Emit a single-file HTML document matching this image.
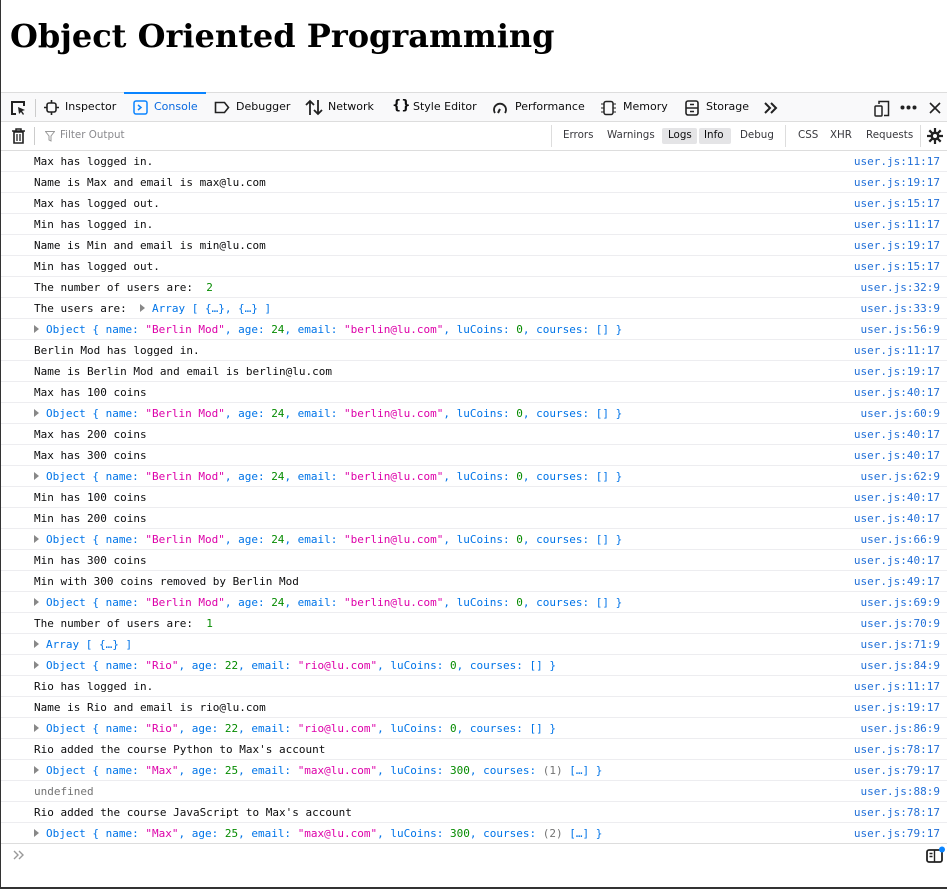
<!DOCTYPE html>
<html><head><meta charset="utf-8"><style>
*{margin:0;padding:0;box-sizing:border-box}
body{width:947px;height:889px;overflow:hidden;background:#fff;position:relative;font-family:"Liberation Sans","DejaVu Sans",sans-serif;border-left:1px solid #333;border-bottom:2px solid #333}
h1{position:absolute;left:9px;top:17px;font:bold 32px "DejaVu Serif",serif;color:#000;white-space:nowrap}
.tb{position:absolute;left:0;top:92px;width:947px;height:30px;background:#f9f9fa;border-top:1px solid #ddd;border-bottom:1px solid #ddd}
.tb span,.fb span{position:absolute;font-family:"DejaVu Sans",sans-serif;font-size:11px;color:#0c0c0d;top:7px;white-space:nowrap}
.fb{position:absolute;left:0;top:122px;width:947px;height:29px;background:#fff;border-bottom:1px solid #ddd}
.fb span{font-size:10.3px;top:7px;color:#38383d}
.ico{position:absolute}
#rows{position:absolute;left:0;top:151px;width:947px}
.r{height:21px;border-bottom:1px solid #ededf0;position:relative;font:11px "DejaVu Sans Mono",monospace;color:#0c0c0d;white-space:pre}
.r .t{position:absolute;left:33px;top:4px}
.r .l{position:absolute;right:8px;top:4px;color:#2270d8}
.o{color:#0074e8}.s{color:#dd00a9}.n{color:#058b00}.u{color:#737373}
.tri{display:inline-block;width:0;height:0;border-left:5px solid #888;border-top:4px solid transparent;border-bottom:4px solid transparent;margin-right:7px;vertical-align:0}
</style></head><body>
<h1>Object Oriented Programming</h1>
<div class="tb">
<div style="position:absolute;left:123px;top:-1px;width:82px;height:2px;background:#0a84ff"></div>
<svg class="ico" style="left:9px;top:7px" width="16" height="16" viewBox="0 0 16 16"><path d="M6 14H2V2h12v4" fill="none" stroke="#222" stroke-width="2"/><path d="M8 7l7 3-3 1 2 3-1 1-2-3-2 2z" fill="#222"/></svg>
<div style="position:absolute;left:34px;top:6px;width:1px;height:18px;background:#ccc"></div>
<svg class="ico" style="left:43px;top:7px" width="15" height="15" viewBox="0 0 15 15"><rect x="3" y="3" width="9" height="9" rx="2" fill="none" stroke="#222" stroke-width="1.6"/><path d="M7.5 0v3M7.5 12v3M0 7.5h3M12 7.5h3" stroke="#222" stroke-width="1.6"/></svg>
<span style="left:64px">Inspector</span>
<svg class="ico" style="left:132px;top:7px" width="15" height="15"><rect x="1" y="1" width="13" height="13" rx="2" fill="none" stroke="#0a84ff" stroke-width="1.5"/><path d="M5 5l3 2.5L5 10" fill="none" stroke="#0a84ff" stroke-width="1.5"/></svg>
<span style="left:153px;color:#0a6ae0">Console</span>
<svg class="ico" style="left:213px;top:8px" width="16" height="13"><path d="M1.5 1.5h9l4 5-4 5h-9z" fill="none" stroke="#222" stroke-width="1.6"/></svg>
<span style="left:235px">Debugger</span>
<svg class="ico" style="left:304px;top:6px" width="18" height="17"><path d="M5 16V2M1 6l4-4 4 4M13 1v14M9 11l4 4 4-4" fill="none" stroke="#222" stroke-width="1.8"/></svg>
<span style="left:327px">Network</span>
<span style="left:391px;font-weight:bold;top:5px;font-size:13px">{}</span>
<span style="left:412px">Style Editor</span>
<svg class="ico" style="left:491px;top:7px" width="16" height="16"><path d="M3 13A6 6 0 1 1 13 13" fill="none" stroke="#222" stroke-width="1.8"/><path d="M8 9l-2 4" stroke="#222" stroke-width="2"/></svg>
<span style="left:514px">Performance</span>
<svg class="ico" style="left:600px;top:7px" width="15" height="16"><rect x="3" y="1.5" width="9" height="13" rx="2" fill="none" stroke="#222" stroke-width="1.5"/><path d="M0 4h3M0 8h3M0 12h3M12 4h3M12 8h3M12 12h3" stroke="#222"/></svg>
<span style="left:622px">Memory</span>
<svg class="ico" style="left:684px;top:7px" width="14" height="16"><rect x="1" y="1" width="12" height="14" rx="2" fill="none" stroke="#222" stroke-width="1.6"/><path d="M1 8h12M5 4.5h4M5 11.5h4" stroke="#222" stroke-width="1.4"/></svg>
<span style="left:705px">Storage</span>
<svg class="ico" style="left:762px;top:8px" width="16" height="14"><path d="M2 2l5 5-5 5M8 2l5 5-5 5" fill="none" stroke="#222" stroke-width="2"/></svg>
<svg class="ico" style="left:873px;top:7px" width="16" height="17"><rect x="1" y="6" width="7" height="10" rx="1" fill="none" stroke="#222" stroke-width="1.5"/><path d="M5 4V1.5h9.5v14H10" fill="none" stroke="#222" stroke-width="1.5"/></svg>
<svg class="ico" style="left:899px;top:12px" width="18" height="5"><circle cx="2.5" cy="2.5" r="2" fill="#222"/><circle cx="8.5" cy="2.5" r="2" fill="#222"/><circle cx="14.5" cy="2.5" r="2" fill="#222"/></svg>
<svg class="ico" style="left:928px;top:9px" width="12" height="12"><path d="M1 1l10 10M11 1L1 11" stroke="#222" stroke-width="1.6"/></svg>
</div>
<div class="fb">
<svg class="ico" style="left:11px;top:6px" width="13" height="16"><path d="M0 3h13M4 3V1h5v2" fill="none" stroke="#222" stroke-width="1.5"/><path d="M2 4h9v11H2z" fill="none" stroke="#222" stroke-width="1.6"/><path d="M5 6v7M8 6v7" stroke="#222" stroke-width="1.3"/></svg>
<div style="position:absolute;left:33px;top:5px;width:1px;height:18px;background:#ccc"></div>
<svg class="ico" style="left:44px;top:9px" width="10" height="11"><path d="M0.5 0.5h9L6 5v5l-2-1V5z" fill="none" stroke="#999"/></svg>
<span style="left:59px;color:#8a8a8e">Filter Output</span>
<div style="position:absolute;left:550px;top:3px;width:1px;height:22px;background:#ddd"></div>
<span style="left:562px">Errors</span>
<span style="left:606px">Warnings</span>
<div style="position:absolute;left:661px;top:6px;width:35px;height:16px;background:#e4e4e6;border-radius:2px"></div>
<span style="left:667px;color:#0c0c0d">Logs</span>
<div style="position:absolute;left:698px;top:6px;width:32px;height:16px;background:#e4e4e6;border-radius:2px"></div>
<span style="left:703px;color:#0c0c0d">Info</span>
<span style="left:739px">Debug</span>
<div style="position:absolute;left:784px;top:3px;width:1px;height:22px;background:#ddd"></div>
<span style="left:797px">CSS</span>
<span style="left:829px">XHR</span>
<span style="left:865px">Requests</span>
<div style="position:absolute;left:919px;top:3px;width:1px;height:22px;background:#ddd"></div>
<svg class="ico" style="left:926px;top:6px" width="16" height="16" viewBox="0 0 16 16"><path d="M8 0v16M0 8h16M2.3 2.3l11.4 11.4M13.7 2.3L2.3 13.7" stroke="#222" stroke-width="2.2"/><circle cx="8" cy="8" r="4.5" fill="#222"/><circle cx="8" cy="8" r="2" fill="#fff"/></svg>
</div>
<div id="rows">
<div class="r"><span class="t">Max has logged in.</span><span class="l">user.js:11:17</span></div>
<div class="r"><span class="t">Name is Max and email is max@lu.com</span><span class="l">user.js:19:17</span></div>
<div class="r"><span class="t">Max has logged out.</span><span class="l">user.js:15:17</span></div>
<div class="r"><span class="t">Min has logged in.</span><span class="l">user.js:11:17</span></div>
<div class="r"><span class="t">Name is Min and email is min@lu.com</span><span class="l">user.js:19:17</span></div>
<div class="r"><span class="t">Min has logged out.</span><span class="l">user.js:15:17</span></div>
<div class="r"><span class="t">The number of users are:  <span class="n">2</span></span><span class="l">user.js:32:9</span></div>
<div class="r"><span class="t">The users are:  <span class="tri"></span><span class="o">Array [ {…}, {…} ]</span></span><span class="l">user.js:33:9</span></div>
<div class="r"><span class="t"><span class="tri"></span><span class="o">Object { name: <span class="s">"Berlin Mod"</span>, age: <span class="n">24</span>, email: <span class="s">"berlin@lu.com"</span>, luCoins: <span class="n">0</span>, courses: [] }</span></span><span class="l">user.js:56:9</span></div>
<div class="r"><span class="t">Berlin Mod has logged in.</span><span class="l">user.js:11:17</span></div>
<div class="r"><span class="t">Name is Berlin Mod and email is berlin@lu.com</span><span class="l">user.js:19:17</span></div>
<div class="r"><span class="t">Max has 100 coins</span><span class="l">user.js:40:17</span></div>
<div class="r"><span class="t"><span class="tri"></span><span class="o">Object { name: <span class="s">"Berlin Mod"</span>, age: <span class="n">24</span>, email: <span class="s">"berlin@lu.com"</span>, luCoins: <span class="n">0</span>, courses: [] }</span></span><span class="l">user.js:60:9</span></div>
<div class="r"><span class="t">Max has 200 coins</span><span class="l">user.js:40:17</span></div>
<div class="r"><span class="t">Max has 300 coins</span><span class="l">user.js:40:17</span></div>
<div class="r"><span class="t"><span class="tri"></span><span class="o">Object { name: <span class="s">"Berlin Mod"</span>, age: <span class="n">24</span>, email: <span class="s">"berlin@lu.com"</span>, luCoins: <span class="n">0</span>, courses: [] }</span></span><span class="l">user.js:62:9</span></div>
<div class="r"><span class="t">Min has 100 coins</span><span class="l">user.js:40:17</span></div>
<div class="r"><span class="t">Min has 200 coins</span><span class="l">user.js:40:17</span></div>
<div class="r"><span class="t"><span class="tri"></span><span class="o">Object { name: <span class="s">"Berlin Mod"</span>, age: <span class="n">24</span>, email: <span class="s">"berlin@lu.com"</span>, luCoins: <span class="n">0</span>, courses: [] }</span></span><span class="l">user.js:66:9</span></div>
<div class="r"><span class="t">Min has 300 coins</span><span class="l">user.js:40:17</span></div>
<div class="r"><span class="t">Min with 300 coins removed by Berlin Mod</span><span class="l">user.js:49:17</span></div>
<div class="r"><span class="t"><span class="tri"></span><span class="o">Object { name: <span class="s">"Berlin Mod"</span>, age: <span class="n">24</span>, email: <span class="s">"berlin@lu.com"</span>, luCoins: <span class="n">0</span>, courses: [] }</span></span><span class="l">user.js:69:9</span></div>
<div class="r"><span class="t">The number of users are:  <span class="n">1</span></span><span class="l">user.js:70:9</span></div>
<div class="r"><span class="t"><span class="tri"></span><span class="o">Array [ {…} ]</span></span><span class="l">user.js:71:9</span></div>
<div class="r"><span class="t"><span class="tri"></span><span class="o">Object { name: <span class="s">"Rio"</span>, age: <span class="n">22</span>, email: <span class="s">"rio@lu.com"</span>, luCoins: <span class="n">0</span>, courses: [] }</span></span><span class="l">user.js:84:9</span></div>
<div class="r"><span class="t">Rio has logged in.</span><span class="l">user.js:11:17</span></div>
<div class="r"><span class="t">Name is Rio and email is rio@lu.com</span><span class="l">user.js:19:17</span></div>
<div class="r"><span class="t"><span class="tri"></span><span class="o">Object { name: <span class="s">"Rio"</span>, age: <span class="n">22</span>, email: <span class="s">"rio@lu.com"</span>, luCoins: <span class="n">0</span>, courses: [] }</span></span><span class="l">user.js:86:9</span></div>
<div class="r"><span class="t">Rio added the course Python to Max's account</span><span class="l">user.js:78:17</span></div>
<div class="r"><span class="t"><span class="tri"></span><span class="o">Object { name: <span class="s">"Max"</span>, age: <span class="n">25</span>, email: <span class="s">"max@lu.com"</span>, luCoins: <span class="n">300</span>, courses: <span class="u">(1)</span> […] }</span></span><span class="l">user.js:79:17</span></div>
<div class="r"><span class="t u">undefined</span><span class="l">user.js:88:9</span></div>
<div class="r"><span class="t">Rio added the course JavaScript to Max's account</span><span class="l">user.js:78:17</span></div>
<div class="r" style="border-bottom:1px solid #ddd"><span class="t"><span class="tri"></span><span class="o">Object { name: <span class="s">"Max"</span>, age: <span class="n">25</span>, email: <span class="s">"max@lu.com"</span>, luCoins: <span class="n">300</span>, courses: <span class="u">(2)</span> […] }</span></span><span class="l">user.js:79:17</span></div>
</div>
<svg class="ico" style="left:12px;top:850px" width="12" height="10"><path d="M1 1l4 4-4 4M6 1l4 4-4 4" fill="none" stroke="#999" stroke-width="1.4"/></svg>
<svg class="ico" style="left:925px;top:846px" width="20" height="18"><rect x="1" y="4" width="15" height="12" rx="2" fill="none" stroke="#222" stroke-width="1.8"/><path d="M8.5 4v12M3.5 7.5h3M3.5 10.5h3" stroke="#222" stroke-width="1.4"/><circle cx="16" cy="3.5" r="3" fill="#0a84ff"/></svg>
</body></html>
